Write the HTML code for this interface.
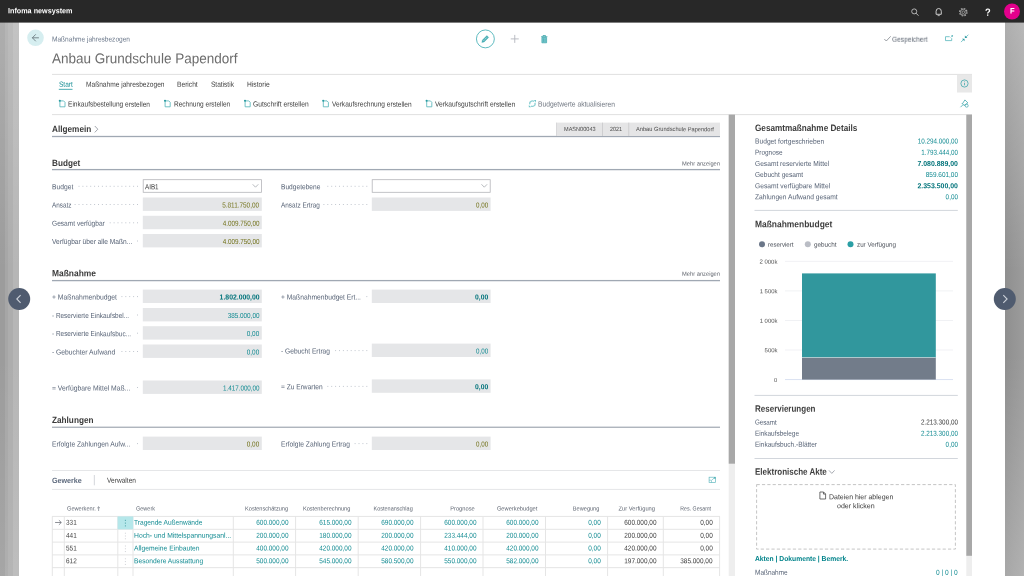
<!DOCTYPE html>
<html lang="de"><head><meta charset="utf-8"><title>Infoma newsystem</title>
<style>
html,body{margin:0;padding:0;}
body{width:1024px;height:576px;overflow:hidden;background:#fff;position:relative;font-family:"Liberation Sans", sans-serif;}
.b{position:absolute;display:block;}
.t{position:absolute;white-space:nowrap;display:block;}
#root{position:absolute;left:0;top:0;width:1024px;height:576px;will-change:transform;}
</style></head><body><div id="root">
<svg class="b" style="left:0;top:0" width="1024" height="576" viewBox="0 0 1024 576">
<defs><linearGradient id="gl" x1="0" y1="0" x2="1" y2="0"><stop offset="0" stop-color="#9c9c9c"/><stop offset="0.26" stop-color="#9c9c9c"/><stop offset="0.26" stop-color="#a6a6a6"/><stop offset="0.42" stop-color="#a6a6a6"/><stop offset="0.42" stop-color="#adadad"/><stop offset="0.68" stop-color="#adadad"/><stop offset="0.68" stop-color="#b6b6b6"/><stop offset="1" stop-color="#b6b6b6"/></linearGradient><linearGradient id="gr" x1="0" y1="0" x2="1" y2="0"><stop offset="0" stop-color="#8f8f8f"/><stop offset="1" stop-color="#9c9c9c"/></linearGradient><linearGradient id="gv1" x1="0" y1="0" x2="0" y2="1"><stop offset="0" stop-color="#fff" stop-opacity=".18"/><stop offset=".45" stop-color="#fff" stop-opacity="0"/><stop offset=".6" stop-color="#fff" stop-opacity="0"/><stop offset="1" stop-color="#fff" stop-opacity=".1"/></linearGradient><linearGradient id="gv2" x1="0" y1="0" x2="0" y2="1"><stop offset="0" stop-color="#fff" stop-opacity=".28"/><stop offset=".45" stop-color="#fff" stop-opacity="0"/><stop offset=".6" stop-color="#fff" stop-opacity="0"/><stop offset="1" stop-color="#fff" stop-opacity=".22"/></linearGradient></defs>
<rect x="0.00" y="22.00" width="19.00" height="554.00" fill="url(#gl)" />
<rect x="0.00" y="22.00" width="19.00" height="554.00" fill="url(#gv1)" />
<rect x="1005.00" y="22.00" width="19.00" height="554.00" fill="url(#gr)" />
<rect x="1005.00" y="22.00" width="19.00" height="554.00" fill="url(#gv2)" />
<rect x="0.00" y="0.00" width="1024.00" height="22.60" fill="#282828" />
<g transform="translate(910.00 7.50)"><circle cx="4.2" cy="3.9" r="2.5" fill="none" stroke="#b9b9b9" stroke-width="0.95"/><path d="M6.1 5.8 L8.2 7.9" stroke="#b9b9b9" stroke-width="1.0" stroke-linecap="round"/></g>
<g transform="translate(934.00 7.00)"><path d="M2.1 7.3 V4.3 A2.6 2.8 0 0 1 7.3 4.3 V7.3 Z" fill="none" stroke="#d4d4d4" stroke-width="0.95" stroke-linejoin="round"/><path d="M4 8.6 H5.4" stroke="#d4d4d4" stroke-width="0.8" stroke-linecap="round"/></g>
<g transform="translate(958.30 7.20)"><circle cx="5" cy="5" r="3.7" fill="none" stroke="#a4a4a4" stroke-width="1.2" stroke-dasharray="1.7 1.2"/><circle cx="5" cy="5" r="2.9" fill="none" stroke="#a4a4a4" stroke-width="0.8"/><circle cx="5" cy="5" r="1.3" fill="none" stroke="#a4a4a4" stroke-width="0.8"/></g>
<circle cx="1012.00" cy="11.50" r="8.00" fill="#e3008c"/>
<circle cx="35.50" cy="37.80" r="8.30" fill="#d6eef0"/>
<g transform="translate(30.50 33.50)"><path d="M8 4.3 H2.1 M5 1.1 L1.9 4.3 L5 7.5" fill="none" stroke="#5f6f75" stroke-width="0.8" stroke-linecap="round" stroke-linejoin="round"/></g>
<circle cx="485.40" cy="38.90" r="8.95" fill="none" stroke="#4db3b9" stroke-width="0.9"/>
<g transform="translate(480.40 33.90)"><path d="M1.4 8.6 L2.0 6.2 L6.5 1.7 L8.3 3.5 L3.8 8.0 Z" fill="#49b0b6" stroke="#3aa4aa" stroke-width="0.3" stroke-linejoin="round"/><path d="M3.3 6.7 L6.7 3.3" stroke="#ffffff" stroke-width="0.7" stroke-dasharray="0.9 0.55"/></g>
<g transform="translate(509.75 33.90)"><path d="M5 1 V9 M1 5 H9" stroke="#b3b5bd" stroke-width="0.9"/></g>
<g transform="translate(540.00 34.40)"><path d="M1.1 2.3 H7.4 M3 2.2 V1.1 H5.5 V2.2" fill="none" stroke="#3aa4aa" stroke-width="0.8"/><path d="M1.9 3 H6.6 V8.4 H1.9 Z" fill="#7ccacf" stroke="#3aa4aa" stroke-width="0.7"/><path d="M3.45 3.9 V7.5 M5.05 3.9 V7.5" stroke="#3aa4aa" stroke-width="0.6"/></g>
<g transform="translate(883.80 35.60)"><path d="M0.5 3.4 L2.5 5.4 L6.9 0.7" fill="none" stroke="#70757d" stroke-width="0.7"/></g>
<g transform="translate(944.80 34.60)"><path d="M4.9 2.1 H0.7 V6 H6.9 V3.6" fill="none" stroke="#4fb3b8" stroke-width="0.75"/><path d="M5.9 2.9 L7.6 1.2" stroke="#4fb3b8" stroke-width="0.7"/><path d="M6.3 0.7 H8.1 V2.5 Z" fill="#3aa4aa"/></g>
<g transform="translate(960.40 34.20)"><path d="M0.6 7.9 L2.9 5.6" stroke="#4fb3b8" stroke-width="0.75"/><path d="M1.6 4.5 H4.1 V7 Z" fill="#2f9ba2"/><path d="M8 0.5 L5.7 2.8" stroke="#4fb3b8" stroke-width="0.75"/><path d="M4.5 1.4 V3.9 H7 Z" fill="#2f9ba2"/></g>
<rect x="52.00" y="73.90" width="920.00" height="1.00" fill="#e0e0e0" />
<rect x="58.80" y="88.85" width="13.70" height="0.90" fill="#3aa4aa" />
<g transform="translate(58.60 99.60)"><path d="M1.3 1.3 H5 L6.4 2.7 V7.2 H1.3 Z" fill="none" stroke="#4fb3b8" stroke-width="0.8"/><circle cx="1.2" cy="1.2" r="1.05" fill="#2a9ba1"/></g>
<g transform="translate(163.80 99.60)"><path d="M1.3 1.3 H5 L6.4 2.7 V7.2 H1.3 Z" fill="none" stroke="#4fb3b8" stroke-width="0.8"/><circle cx="1.2" cy="1.2" r="1.05" fill="#2a9ba1"/></g>
<g transform="translate(243.80 99.60)"><path d="M1.3 1.3 H5 L6.4 2.7 V7.2 H1.3 Z" fill="none" stroke="#4fb3b8" stroke-width="0.8"/><circle cx="1.2" cy="1.2" r="1.05" fill="#2a9ba1"/></g>
<g transform="translate(322.00 99.60)"><path d="M1.3 1.3 H5 L6.4 2.7 V7.2 H1.3 Z" fill="none" stroke="#4fb3b8" stroke-width="0.8"/><circle cx="1.2" cy="1.2" r="1.05" fill="#2a9ba1"/></g>
<g transform="translate(425.40 99.60)"><path d="M1.3 1.3 H5 L6.4 2.7 V7.2 H1.3 Z" fill="none" stroke="#4fb3b8" stroke-width="0.8"/><circle cx="1.2" cy="1.2" r="1.05" fill="#2a9ba1"/></g>
<g transform="translate(528.40 99.70)"><circle cx="4" cy="4" r="2.7" fill="none" stroke="#8ed0d4" stroke-width="1.25" stroke-dasharray="6.6 1.88" transform="rotate(-20 4 4)"/><path d="M5.4 0.4 H7.6 V2.6 Z" fill="#6cc3c7"/><path d="M2.6 7.6 H0.4 V5.4 Z" fill="#6cc3c7"/></g>
<rect x="957.00" y="74.90" width="15.00" height="17.60" fill="#e8e8e8" />
<g transform="translate(960.00 79.00)"><circle cx="4.5" cy="4.5" r="3.6" fill="none" stroke="#3aa4aa" stroke-width="0.75"/><path d="M4.5 3.9 V6.3" stroke="#3aa4aa" stroke-width="0.75"/><circle cx="4.5" cy="2.8" r="0.45" fill="#3aa4aa"/></g>
<g transform="translate(959.50 98.50)"><path d="M1 8.7 L3.7 6 M2.3 4.6 L5.2 7.5 M3 5.2 L5.4 1.4 L8.4 4.4 L4.6 6.8" fill="none" stroke="#3aa4aa" stroke-width="0.75" stroke-linejoin="round"/><circle cx="7.2" cy="7.2" r="1.5" fill="none" stroke="#3aa4aa" stroke-width="0.7"/></g>
<rect x="52.00" y="114.10" width="920.00" height="1.00" fill="#e0e0e0" />
<g transform="translate(93.80 125.20)"><path d="M1 0.8 L4 4 L1 7.2" fill="none" stroke="#8a8f98" stroke-width="0.8"/></g>
<rect x="52.00" y="135.85" width="668.00" height="1.30" fill="#a0a8b3" />
<rect x="556.30" y="122.60" width="163.70" height="13.40" fill="#e5e5e6" />
<rect x="602.20" y="122.60" width="0.80" height="13.40" fill="#c9c9cb" />
<rect x="628.40" y="122.60" width="0.80" height="13.40" fill="#c9c9cb" />
<rect x="556.25" y="122.60" width="0.70" height="13.40" fill="#cfcfd1" />
<rect x="728.70" y="114.60" width="6.30" height="461.40" fill="#eeeeee" />
<rect x="728.70" y="114.60" width="6.30" height="349.10" fill="#a8a8a8" />
<rect x="52.00" y="168.95" width="668.00" height="1.30" fill="#a0a8b3" />
<rect x="143.20" y="179.70" width="118.20" height="12.60" fill="#ffffff" stroke="#b4b5b9" stroke-width="0.8" />
<g transform="translate(252.00 183.40)"><path d="M0.7 0.9 L3.5 3.8 L6.3 0.9" fill="none" stroke="#9a9da3" stroke-width="0.7"/></g>
<path d="M78.50 186.30 H138.00" stroke="#c2c7cf" stroke-width="1" stroke-dasharray="1 2.9" fill="none"/>
<rect x="142.80" y="197.50" width="119.00" height="13.40" fill="#e5e6e8" />
<path d="M74.60 204.50 H138.00" stroke="#c2c7cf" stroke-width="1" stroke-dasharray="1 2.9" fill="none"/>
<rect x="142.80" y="215.80" width="119.00" height="13.40" fill="#e5e6e8" />
<path d="M109.70 222.80 H138.00" stroke="#c2c7cf" stroke-width="1" stroke-dasharray="1 2.9" fill="none"/>
<rect x="142.80" y="234.00" width="119.00" height="13.40" fill="#e5e6e8" />
<path d="M137.00 241.00 H138.00" stroke="#c2c7cf" stroke-width="1" stroke-dasharray="1 2.9" fill="none"/>
<rect x="372.20" y="179.70" width="118.00" height="12.60" fill="#ffffff" stroke="#b4b5b9" stroke-width="0.8" />
<g transform="translate(480.80 183.40)"><path d="M0.7 0.9 L3.5 3.8 L6.3 0.9" fill="none" stroke="#9a9da3" stroke-width="0.7"/></g>
<path d="M327.30 186.30 H367.30" stroke="#c2c7cf" stroke-width="1" stroke-dasharray="1 2.9" fill="none"/>
<rect x="371.80" y="197.50" width="118.80" height="13.40" fill="#e5e6e8" />
<path d="M323.40 204.50 H367.30" stroke="#c2c7cf" stroke-width="1" stroke-dasharray="1 2.9" fill="none"/>
<rect x="52.00" y="279.95" width="668.00" height="1.30" fill="#a0a8b3" />
<rect x="142.80" y="289.60" width="119.00" height="13.40" fill="#e5e6e8" />
<path d="M121.40 296.60 H138.00" stroke="#c2c7cf" stroke-width="1" stroke-dasharray="1 2.9" fill="none"/>
<rect x="142.80" y="308.00" width="119.00" height="13.40" fill="#e5e6e8" />
<path d="M137.00 315.00 H138.00" stroke="#c2c7cf" stroke-width="1" stroke-dasharray="1 2.9" fill="none"/>
<rect x="142.80" y="326.20" width="119.00" height="13.40" fill="#e5e6e8" />
<path d="M137.00 333.20 H138.00" stroke="#c2c7cf" stroke-width="1" stroke-dasharray="1 2.9" fill="none"/>
<rect x="142.80" y="344.50" width="119.00" height="13.40" fill="#e5e6e8" />
<path d="M121.40 351.50 H138.00" stroke="#c2c7cf" stroke-width="1" stroke-dasharray="1 2.9" fill="none"/>
<rect x="142.80" y="380.50" width="119.00" height="13.40" fill="#e5e6e8" />
<path d="M137.00 387.50 H138.00" stroke="#c2c7cf" stroke-width="1" stroke-dasharray="1 2.9" fill="none"/>
<rect x="371.80" y="289.60" width="118.80" height="13.40" fill="#e5e6e8" />
<path d="M366.30 296.60 H367.30" stroke="#c2c7cf" stroke-width="1" stroke-dasharray="1 2.9" fill="none"/>
<rect x="371.80" y="343.60" width="118.80" height="13.40" fill="#e5e6e8" />
<path d="M335.10 350.60 H367.30" stroke="#c2c7cf" stroke-width="1" stroke-dasharray="1 2.9" fill="none"/>
<rect x="371.80" y="379.40" width="118.80" height="13.40" fill="#e5e6e8" />
<path d="M327.30 386.40 H367.30" stroke="#c2c7cf" stroke-width="1" stroke-dasharray="1 2.9" fill="none"/>
<rect x="52.00" y="426.70" width="668.00" height="1.00" fill="#8d96a2" />
<rect x="142.80" y="436.60" width="119.00" height="13.40" fill="#e5e6e8" />
<path d="M137.00 443.60 H138.00" stroke="#c2c7cf" stroke-width="1" stroke-dasharray="1 2.9" fill="none"/>
<rect x="371.80" y="436.60" width="118.80" height="13.40" fill="#e5e6e8" />
<path d="M354.60 443.60 H367.30" stroke="#c2c7cf" stroke-width="1" stroke-dasharray="1 2.9" fill="none"/>
<rect x="52.00" y="470.00" width="668.00" height="1.00" fill="#e5e6e8" />
<rect x="52.00" y="488.90" width="668.00" height="1.00" fill="#e5e6e8" />
<rect x="93.85" y="475.00" width="0.90" height="10.30" fill="#cfd2d7" />
<g transform="translate(708.70 476.80)"><rect x="0.4" y="0.4" width="6.5" height="5.4" fill="none" stroke="#62b9bf" stroke-width="0.7"/><path d="M0.4 3.4 H2.8 V5.8" fill="none" stroke="#62b9bf" stroke-width="0.6"/><path d="M3.4 3.0 L5.9 0.9" stroke="#62b9bf" stroke-width="0.7"/><rect x="5.3" y="0.4" width="1.6" height="1.4" fill="#4aacb2"/></g>
<g transform="translate(96.60 506.30)"><path d="M2 0.5 V4.7 M0.6 1.9 L2 0.5 L3.4 1.9" fill="none" stroke="#5f6672" stroke-width="0.6"/></g>
<rect x="52.00" y="515.90" width="668.00" height="1.00" fill="#e5e5e5" />
<rect x="52.00" y="528.80" width="668.00" height="1.00" fill="#e5e5e5" />
<rect x="52.00" y="541.60" width="668.00" height="1.00" fill="#e5e5e5" />
<rect x="52.00" y="554.40" width="668.00" height="1.00" fill="#e5e5e5" />
<rect x="52.00" y="567.15" width="668.00" height="1.00" fill="#e5e5e5" />
<rect x="51.80" y="516.40" width="1.00" height="59.60" fill="#e5e5e5" />
<rect x="63.80" y="516.40" width="1.00" height="59.60" fill="#e5e5e5" />
<rect x="117.30" y="516.40" width="1.00" height="59.60" fill="#e5e5e5" />
<rect x="132.50" y="516.40" width="1.00" height="59.60" fill="#e5e5e5" />
<rect x="232.80" y="516.40" width="1.00" height="59.60" fill="#e5e5e5" />
<rect x="295.10" y="516.40" width="1.00" height="59.60" fill="#e5e5e5" />
<rect x="357.70" y="516.40" width="1.00" height="59.60" fill="#e5e5e5" />
<rect x="420.10" y="516.40" width="1.00" height="59.60" fill="#e5e5e5" />
<rect x="482.50" y="516.40" width="1.00" height="59.60" fill="#e5e5e5" />
<rect x="545.00" y="516.40" width="1.00" height="59.60" fill="#e5e5e5" />
<rect x="607.10" y="516.40" width="1.00" height="59.60" fill="#e5e5e5" />
<rect x="662.80" y="516.40" width="1.00" height="59.60" fill="#e5e5e5" />
<rect x="719.10" y="516.40" width="1.00" height="59.60" fill="#e5e5e5" />
<rect x="117.60" y="516.40" width="15.60" height="12.90" fill="#b5e7ea" />
<rect x="124.90" y="519.85" width="0.90" height="0.90" fill="#2a8d93" />
<rect x="124.90" y="522.65" width="0.90" height="0.90" fill="#2a8d93" />
<rect x="124.90" y="525.45" width="0.90" height="0.90" fill="#2a8d93" />
<rect x="124.90" y="532.75" width="0.90" height="0.90" fill="#c5c8cd" />
<rect x="124.90" y="535.55" width="0.90" height="0.90" fill="#c5c8cd" />
<rect x="124.90" y="538.35" width="0.90" height="0.90" fill="#c5c8cd" />
<rect x="124.90" y="545.55" width="0.90" height="0.90" fill="#c5c8cd" />
<rect x="124.90" y="548.35" width="0.90" height="0.90" fill="#c5c8cd" />
<rect x="124.90" y="551.15" width="0.90" height="0.90" fill="#c5c8cd" />
<rect x="124.90" y="558.35" width="0.90" height="0.90" fill="#c5c8cd" />
<rect x="124.90" y="561.15" width="0.90" height="0.90" fill="#c5c8cd" />
<rect x="124.90" y="563.95" width="0.90" height="0.90" fill="#c5c8cd" />
<g transform="translate(54.60 519.10)"><path d="M0.5 3.4 H6.6 M4.3 1.1 L6.7 3.4 L4.3 5.7" fill="none" stroke="#5b6068" stroke-width="0.7"/></g>
<rect x="966.30" y="114.60" width="5.70" height="461.40" fill="#eeeeee" />
<rect x="966.30" y="114.60" width="5.70" height="441.20" fill="#a8a8a8" />
<rect x="754.50" y="209.90" width="203.30" height="1.00" fill="#d2d6dc" />
<circle cx="762.00" cy="244.30" r="3.00" fill="#6b7789"/>
<circle cx="807.80" cy="244.30" r="3.00" fill="#babdc5"/>
<circle cx="850.50" cy="244.30" r="3.00" fill="#2b9fa5"/>
<rect x="785.00" y="260.85" width="168.00" height="0.90" fill="#eff0f3" />
<rect x="785.00" y="290.45" width="168.00" height="0.90" fill="#eff0f3" />
<rect x="785.00" y="320.05" width="168.00" height="0.90" fill="#eff0f3" />
<rect x="785.00" y="349.55" width="168.00" height="0.90" fill="#eff0f3" />
<rect x="785.00" y="379.15" width="168.00" height="0.90" fill="#d6dff0" />
<rect x="802.00" y="273.40" width="133.80" height="83.90" fill="#31979d" />
<rect x="802.00" y="357.30" width="133.80" height="22.30" fill="#727c8a" />
<rect x="802.00" y="357.00" width="133.80" height="0.80" fill="#b9d6da" />
<rect x="754.50" y="394.90" width="203.30" height="1.00" fill="#d2d6dc" />
<rect x="754.50" y="458.00" width="203.30" height="1.00" fill="#d2d6dc" />
<g transform="translate(828.40 469.60)"><path d="M0.6 0.8 L3.4 3.8 L6.2 0.8" fill="none" stroke="#8a8f98" stroke-width="0.75"/></g>
<rect x="756.6" y="484.6" width="198.8" height="64.5" fill="none" stroke="#bebebe" stroke-width="0.9" stroke-dasharray="3.2 2.15"/>
<g transform="translate(819.30 491.40)"><path d="M0.6 0.6 H4.3 L6.3 2.6 V7.6 H0.6 Z M4.2 0.7 V2.7 H6.2" fill="none" stroke="#4a4a4a" stroke-width="0.8" stroke-linejoin="round"/></g>
<circle cx="19.20" cy="299.00" r="11.00" fill="#4f5b6f"/>
<g transform="translate(14.70 294.00)"><path d="M5.9 1.2 L2.1 5 L5.9 8.8" fill="none" stroke="#ccd1d9" stroke-width="1.1"/></g>
<circle cx="1004.80" cy="299.00" r="11.00" fill="#4f5b6f"/>
<g transform="translate(1001.20 294.00)"><path d="M2.1 1.2 L5.9 5 L2.1 8.8" fill="none" stroke="#ccd1d9" stroke-width="1.1"/></g>
</svg>
<span class="t" id="t0" style="top:6px;font-size:7.5px;line-height:9.75px;color:#ffffff;font-weight:700;left:7.50px;transform-origin:0 50%;transform:translateY(0.32px) scaleX(0.9611) rotate(0.03deg);">Infoma newsystem</span>
<span class="t" id="t1" style="top:5px;font-size:10.5px;line-height:13.65px;color:#ffffff;font-weight:700;left:985.20px;transform-origin:0 50%;transform:translateY(0.77px) scaleX(0.8867) rotate(0.03deg);">?</span>
<span class="t" id="t2" style="top:6px;font-size:8px;line-height:10.4px;color:#ffffff;font-weight:700;left:1009.70px;transform-origin:0 50%;transform:translateY(0.40px) scaleX(0.9397) rotate(0.03deg);">F</span>
<span class="t" id="t3" style="top:34px;font-size:7.2px;line-height:9.36px;color:#6a778a;left:52.00px;transform-origin:0 50%;transform:translateY(0.42px) scaleX(0.9121) rotate(0.03deg);">Maßnahme jahresbezogen</span>
<span class="t" id="t4" style="top:49px;font-size:14.2px;line-height:18.46px;color:#6c6c6c;left:52.00px;transform-origin:0 50%;transform:translateY(0.27px) scaleX(0.9521) rotate(0.03deg);">Anbau Grundschule Papendorf</span>
<span class="t" id="t5" style="top:34px;font-size:7.3px;line-height:9.49px;color:#5a6370;left:891.60px;transform-origin:0 50%;transform:translateY(0.76px) scaleX(0.9047) rotate(0.03deg);">Gespeichert</span>
<span class="t" id="t6" style="top:79px;font-size:7.4px;line-height:9.62px;color:#128b92;left:58.80px;transform-origin:0 50%;transform:translateY(0.69px) scaleX(0.8774) rotate(0.03deg);">Start</span>
<span class="t" id="t7" style="top:79px;font-size:7.4px;line-height:9.62px;color:#3c3c3c;left:85.50px;transform-origin:0 50%;transform:translateY(0.69px) scaleX(0.8928) rotate(0.03deg);">Maßnahme jahresbezogen</span>
<span class="t" id="t8" style="top:79px;font-size:7.4px;line-height:9.62px;color:#3c3c3c;left:176.80px;transform-origin:0 50%;transform:translateY(0.69px) scaleX(0.8992) rotate(0.03deg);">Bericht</span>
<span class="t" id="t9" style="top:79px;font-size:7.4px;line-height:9.62px;color:#3c3c3c;left:210.80px;transform-origin:0 50%;transform:translateY(0.69px) scaleX(0.8849) rotate(0.03deg);">Statistik</span>
<span class="t" id="t10" style="top:79px;font-size:7.4px;line-height:9.62px;color:#3c3c3c;left:246.80px;transform-origin:0 50%;transform:translateY(0.69px) scaleX(0.9056) rotate(0.03deg);">Historie</span>
<span class="t" id="t11" style="top:99px;font-size:7.4px;line-height:9.62px;color:#3c3c3c;left:68.30px;transform-origin:0 50%;transform:translateY(0.59px) scaleX(0.8910) rotate(0.03deg);">Einkaufsbestellung erstellen</span>
<span class="t" id="t12" style="top:99px;font-size:7.4px;line-height:9.62px;color:#3c3c3c;left:173.80px;transform-origin:0 50%;transform:translateY(0.59px) scaleX(0.8824) rotate(0.03deg);">Rechnung erstellen</span>
<span class="t" id="t13" style="top:99px;font-size:7.4px;line-height:9.62px;color:#3c3c3c;left:253.30px;transform-origin:0 50%;transform:translateY(0.59px) scaleX(0.9038) rotate(0.03deg);">Gutschrift erstellen</span>
<span class="t" id="t14" style="top:99px;font-size:7.4px;line-height:9.62px;color:#3c3c3c;left:332.30px;transform-origin:0 50%;transform:translateY(0.59px) scaleX(0.8897) rotate(0.03deg);">Verkaufsrechnung erstellen</span>
<span class="t" id="t15" style="top:99px;font-size:7.4px;line-height:9.62px;color:#3c3c3c;left:435.30px;transform-origin:0 50%;transform:translateY(0.59px) scaleX(0.9038) rotate(0.03deg);">Verkaufsgutschrift erstellen</span>
<span class="t" id="t16" style="top:99px;font-size:7.4px;line-height:9.62px;color:#6f7680;left:538.00px;transform-origin:0 50%;transform:translateY(0.59px) scaleX(0.9053) rotate(0.03deg);">Budgetwerte aktualisieren</span>
<span class="t" id="t17" style="top:123px;font-size:9.0px;line-height:11.7px;color:#3a3a3a;font-weight:700;left:52.00px;transform-origin:0 50%;transform:translateY(0.95px) scaleX(0.9135) rotate(0.03deg);">Allgemein</span>
<span class="t" id="t18" style="top:126px;font-size:6.0px;line-height:7.8px;color:#4a4a4a;left:563.60px;transform-origin:0 50%;transform:translateY(0.10px) scaleX(0.9285) rotate(0.03deg);">MASN00043</span>
<span class="t" id="t19" style="top:126px;font-size:6.0px;line-height:7.8px;color:#4a4a4a;left:609.60px;transform-origin:0 50%;transform:translateY(0.10px) scaleX(0.8980) rotate(0.03deg);">2021</span>
<span class="t" id="t20" style="top:126px;font-size:6.0px;line-height:7.8px;color:#4a4a4a;left:635.60px;transform-origin:0 50%;transform:translateY(0.10px) scaleX(0.9453) rotate(0.03deg);">Anbau Grundschule Papendorf</span>
<span class="t" id="t21" style="top:158px;font-size:9.0px;line-height:11.7px;color:#3a3a3a;font-weight:700;left:52.00px;transform-origin:0 50%;transform:translateY(0.05px) scaleX(0.9095) rotate(0.03deg);">Budget</span>
<span class="t" id="t22" style="top:160px;font-size:5.9px;line-height:7.67px;color:#5a5f68;left:682.00px;transform-origin:0 50%;transform:translateY(0.56px) scaleX(0.9751) rotate(0.03deg);">Mehr anzeigen</span>
<span class="t" id="t23" style="top:182px;font-size:7.3px;line-height:9.49px;color:#566275;left:52.00px;transform-origin:0 50%;transform:translateY(0.20px) scaleX(0.9203) rotate(0.03deg);">Budget</span>
<span class="t" id="t24" style="top:182px;font-size:7.3px;line-height:9.49px;color:#3a3a3a;left:145.20px;transform-origin:0 50%;transform:translateY(0.20px) scaleX(0.8590) rotate(0.03deg);">AIB1</span>
<span class="t" id="t25" style="top:200px;font-size:7.3px;line-height:9.49px;color:#566275;left:52.00px;transform-origin:0 50%;transform:translateY(0.40px) scaleX(0.8738) rotate(0.03deg);">Ansatz</span>
<span class="t" id="t26" style="top:200px;font-size:7.3px;line-height:9.49px;color:#73731c;right:764.50px;transform-origin:100% 50%;transform:translateY(0.40px) scaleX(0.8768) rotate(0.03deg);">5.811.750,00</span>
<span class="t" id="t27" style="top:218px;font-size:7.3px;line-height:9.49px;color:#566275;left:52.00px;transform-origin:0 50%;transform:translateY(0.70px) scaleX(0.9039) rotate(0.03deg);">Gesamt verfügbar</span>
<span class="t" id="t28" style="top:218px;font-size:7.3px;line-height:9.49px;color:#73731c;right:764.50px;transform-origin:100% 50%;transform:translateY(0.70px) scaleX(0.8659) rotate(0.03deg);">4.009.750,00</span>
<span class="t" id="t29" style="top:236px;font-size:7.3px;line-height:9.49px;color:#566275;left:52.00px;transform-origin:0 50%;transform:translateY(0.90px) scaleX(0.9081) rotate(0.03deg);">Verfügbar über alle Maßn...</span>
<span class="t" id="t30" style="top:236px;font-size:7.3px;line-height:9.49px;color:#73731c;right:764.50px;transform-origin:100% 50%;transform:translateY(0.90px) scaleX(0.8659) rotate(0.03deg);">4.009.750,00</span>
<span class="t" id="t31" style="top:182px;font-size:7.3px;line-height:9.49px;color:#566275;left:281.30px;transform-origin:0 50%;transform:translateY(0.20px) scaleX(0.9073) rotate(0.03deg);">Budgetebene</span>
<span class="t" id="t32" style="top:200px;font-size:7.3px;line-height:9.49px;color:#566275;left:281.30px;transform-origin:0 50%;transform:translateY(0.40px) scaleX(0.8796) rotate(0.03deg);">Ansatz Ertrag</span>
<span class="t" id="t33" style="top:200px;font-size:7.3px;line-height:9.49px;color:#73731c;right:535.70px;transform-origin:100% 50%;transform:translateY(0.40px) scaleX(0.8516) rotate(0.03deg);">0,00</span>
<span class="t" id="t34" style="top:268px;font-size:9.0px;line-height:11.7px;color:#3a3a3a;font-weight:700;left:52.00px;transform-origin:0 50%;transform:translateY(0.25px) scaleX(0.9358) rotate(0.03deg);">Maßnahme</span>
<span class="t" id="t35" style="top:270px;font-size:5.9px;line-height:7.67px;color:#5a5f68;left:682.00px;transform-origin:0 50%;transform:translateY(0.76px) scaleX(0.9751) rotate(0.03deg);">Mehr anzeigen</span>
<span class="t" id="t36" style="top:292px;font-size:7.3px;line-height:9.49px;color:#566275;left:52.00px;transform-origin:0 50%;transform:translateY(0.50px) scaleX(0.9341) rotate(0.03deg);">+ Maßnahmenbudget</span>
<span class="t" id="t37" style="top:292px;font-size:7.3px;line-height:9.49px;color:#00737a;font-weight:700;right:764.50px;transform-origin:100% 50%;transform:translateY(0.50px) scaleX(0.9387) rotate(0.03deg);">1.802.000,00</span>
<span class="t" id="t38" style="top:310px;font-size:7.3px;line-height:9.49px;color:#566275;left:52.00px;transform-origin:0 50%;transform:translateY(0.90px) scaleX(0.8789) rotate(0.03deg);">- Reservierte Einkaufsbel...</span>
<span class="t" id="t39" style="top:310px;font-size:7.3px;line-height:9.49px;color:#128b92;right:764.50px;transform-origin:100% 50%;transform:translateY(0.90px) scaleX(0.8731) rotate(0.03deg);">385.000,00</span>
<span class="t" id="t40" style="top:329px;font-size:7.3px;line-height:9.49px;color:#566275;left:52.00px;transform-origin:0 50%;transform:translateY(0.10px) scaleX(0.8813) rotate(0.03deg);">- Reservierte Einkaufsbuc...</span>
<span class="t" id="t41" style="top:329px;font-size:7.3px;line-height:9.49px;color:#128b92;right:764.50px;transform-origin:100% 50%;transform:translateY(0.10px) scaleX(0.8798) rotate(0.03deg);">0,00</span>
<span class="t" id="t42" style="top:347px;font-size:7.3px;line-height:9.49px;color:#566275;left:52.00px;transform-origin:0 50%;transform:translateY(0.40px) scaleX(0.9232) rotate(0.03deg);">- Gebuchter Aufwand</span>
<span class="t" id="t43" style="top:347px;font-size:7.3px;line-height:9.49px;color:#128b92;right:764.50px;transform-origin:100% 50%;transform:translateY(0.40px) scaleX(0.8798) rotate(0.03deg);">0,00</span>
<span class="t" id="t44" style="top:383px;font-size:7.3px;line-height:9.49px;color:#566275;left:52.00px;transform-origin:0 50%;transform:translateY(0.40px) scaleX(0.9304) rotate(0.03deg);">= Verfügbare Mittel Maß...</span>
<span class="t" id="t45" style="top:383px;font-size:7.3px;line-height:9.49px;color:#128b92;right:764.50px;transform-origin:100% 50%;transform:translateY(0.40px) scaleX(0.8612) rotate(0.03deg);">1.417.000,00</span>
<span class="t" id="t46" style="top:292px;font-size:7.3px;line-height:9.49px;color:#566275;left:281.30px;transform-origin:0 50%;transform:translateY(0.50px) scaleX(0.9193) rotate(0.03deg);">+ Maßnahmenbudget Ert...</span>
<span class="t" id="t47" style="top:292px;font-size:7.3px;line-height:9.49px;color:#00737a;font-weight:700;right:535.70px;transform-origin:100% 50%;transform:translateY(0.50px) scaleX(0.9220) rotate(0.03deg);">0,00</span>
<span class="t" id="t48" style="top:346px;font-size:7.3px;line-height:9.49px;color:#566275;left:281.30px;transform-origin:0 50%;transform:translateY(0.50px) scaleX(0.9081) rotate(0.03deg);">- Gebucht Ertrag</span>
<span class="t" id="t49" style="top:346px;font-size:7.3px;line-height:9.49px;color:#128b92;right:535.70px;transform-origin:100% 50%;transform:translateY(0.50px) scaleX(0.8516) rotate(0.03deg);">0,00</span>
<span class="t" id="t50" style="top:382px;font-size:7.3px;line-height:9.49px;color:#566275;left:281.30px;transform-origin:0 50%;transform:translateY(0.30px) scaleX(0.9058) rotate(0.03deg);">= Zu Erwarten</span>
<span class="t" id="t51" style="top:382px;font-size:7.3px;line-height:9.49px;color:#00737a;font-weight:700;right:535.70px;transform-origin:100% 50%;transform:translateY(0.30px) scaleX(0.9220) rotate(0.03deg);">0,00</span>
<span class="t" id="t52" style="top:415px;font-size:9.0px;line-height:11.7px;color:#3a3a3a;font-weight:700;left:52.00px;transform-origin:0 50%;transform:translateY(0.05px) scaleX(0.9120) rotate(0.03deg);">Zahlungen</span>
<span class="t" id="t53" style="top:439px;font-size:7.3px;line-height:9.49px;color:#566275;left:52.00px;transform-origin:0 50%;transform:translateY(0.50px) scaleX(0.9191) rotate(0.03deg);">Erfolgte Zahlungen Aufw...</span>
<span class="t" id="t54" style="top:439px;font-size:7.3px;line-height:9.49px;color:#73731c;right:764.50px;transform-origin:100% 50%;transform:translateY(0.50px) scaleX(0.8798) rotate(0.03deg);">0,00</span>
<span class="t" id="t55" style="top:439px;font-size:7.3px;line-height:9.49px;color:#566275;left:281.30px;transform-origin:0 50%;transform:translateY(0.50px) scaleX(0.9144) rotate(0.03deg);">Erfolgte Zahlung Ertrag</span>
<span class="t" id="t56" style="top:439px;font-size:7.3px;line-height:9.49px;color:#73731c;right:535.70px;transform-origin:100% 50%;transform:translateY(0.50px) scaleX(0.8516) rotate(0.03deg);">0,00</span>
<span class="t" id="t57" style="top:476px;font-size:7.6px;line-height:9.88px;color:#5f6b7e;font-weight:700;left:52.00px;transform-origin:0 50%;transform:translateY(0.06px) scaleX(0.9408) rotate(0.03deg);">Gewerke</span>
<span class="t" id="t58" style="top:475px;font-size:7.3px;line-height:9.49px;color:#3c3c3c;left:107.00px;transform-origin:0 50%;transform:translateY(0.65px) scaleX(0.9048) rotate(0.03deg);">Verwalten</span>
<span class="t" id="t59" style="top:505px;font-size:6.0px;line-height:7.8px;color:#5f6672;left:67.00px;transform-origin:0 50%;transform:translateY(0.60px) scaleX(0.9384) rotate(0.03deg);">Gewerkenr.</span>
<span class="t" id="t60" style="top:505px;font-size:6.0px;line-height:7.8px;color:#5f6672;left:136.00px;transform-origin:0 50%;transform:translateY(0.60px) scaleX(0.9190) rotate(0.03deg);">Gewerk</span>
<span class="t" id="t61" style="top:505px;font-size:6.0px;line-height:7.8px;color:#5f6672;right:736.00px;transform-origin:100% 50%;transform:translateY(0.60px) scaleX(0.9341) rotate(0.03deg);">Kostenschätzung</span>
<span class="t" id="t62" style="top:505px;font-size:6.0px;line-height:7.8px;color:#5f6672;right:673.70px;transform-origin:100% 50%;transform:translateY(0.60px) scaleX(0.9429) rotate(0.03deg);">Kostenberechnung</span>
<span class="t" id="t63" style="top:505px;font-size:6.0px;line-height:7.8px;color:#5f6672;right:611.50px;transform-origin:100% 50%;transform:translateY(0.60px) scaleX(0.9179) rotate(0.03deg);">Kostenanschlag</span>
<span class="t" id="t64" style="top:505px;font-size:6.0px;line-height:7.8px;color:#5f6672;right:549.00px;transform-origin:100% 50%;transform:translateY(0.60px) scaleX(0.9537) rotate(0.03deg);">Prognose</span>
<span class="t" id="t65" style="top:505px;font-size:6.0px;line-height:7.8px;color:#5f6672;right:486.50px;transform-origin:100% 50%;transform:translateY(0.60px) scaleX(0.9557) rotate(0.03deg);">Gewerkebudget</span>
<span class="t" id="t66" style="top:505px;font-size:6.0px;line-height:7.8px;color:#5f6672;right:424.70px;transform-origin:100% 50%;transform:translateY(0.60px) scaleX(0.9343) rotate(0.03deg);">Bewegung</span>
<span class="t" id="t67" style="top:505px;font-size:6.0px;line-height:7.8px;color:#5f6672;right:368.70px;transform-origin:100% 50%;transform:translateY(0.60px) scaleX(0.9597) rotate(0.03deg);">Zur Verfügung</span>
<span class="t" id="t68" style="top:505px;font-size:6.0px;line-height:7.8px;color:#5f6672;right:312.50px;transform-origin:100% 50%;transform:translateY(0.60px) scaleX(0.8767) rotate(0.03deg);">Res. Gesamt</span>
<span class="t" id="t69" style="top:518px;font-size:7.1px;line-height:9.23px;color:#3a3a3a;left:65.80px;transform-origin:0 50%;transform:translateY(0.78px) scaleX(0.9031) rotate(0.03deg);">331</span>
<span class="t" id="t70" style="top:518px;font-size:7.1px;line-height:9.23px;color:#128b92;left:134.10px;transform-origin:0 50%;transform:translateY(0.78px) scaleX(0.9306) rotate(0.03deg);">Tragende Außenwände</span>
<span class="t" id="t71" style="top:518px;font-size:7.1px;line-height:9.23px;color:#128b92;right:735.00px;transform-origin:100% 50%;transform:translateY(0.78px) scaleX(0.9094) rotate(0.03deg);">600.000,00</span>
<span class="t" id="t72" style="top:518px;font-size:7.1px;line-height:9.23px;color:#128b92;right:672.70px;transform-origin:100% 50%;transform:translateY(0.78px) scaleX(0.9094) rotate(0.03deg);">615.000,00</span>
<span class="t" id="t73" style="top:518px;font-size:7.1px;line-height:9.23px;color:#128b92;right:610.20px;transform-origin:100% 50%;transform:translateY(0.78px) scaleX(0.9094) rotate(0.03deg);">690.000,00</span>
<span class="t" id="t74" style="top:518px;font-size:7.1px;line-height:9.23px;color:#128b92;right:547.80px;transform-origin:100% 50%;transform:translateY(0.78px) scaleX(0.9094) rotate(0.03deg);">600.000,00</span>
<span class="t" id="t75" style="top:518px;font-size:7.1px;line-height:9.23px;color:#128b92;right:485.20px;transform-origin:100% 50%;transform:translateY(0.78px) scaleX(0.9094) rotate(0.03deg);">600.000,00</span>
<span class="t" id="t76" style="top:518px;font-size:7.1px;line-height:9.23px;color:#128b92;right:423.50px;transform-origin:100% 50%;transform:translateY(0.78px) scaleX(0.9119) rotate(0.03deg);">0,00</span>
<span class="t" id="t77" style="top:518px;font-size:7.1px;line-height:9.23px;color:#3a3a3a;right:367.50px;transform-origin:100% 50%;transform:translateY(0.78px) scaleX(0.9094) rotate(0.03deg);">600.000,00</span>
<span class="t" id="t78" style="top:518px;font-size:7.1px;line-height:9.23px;color:#3a3a3a;right:311.50px;transform-origin:100% 50%;transform:translateY(0.78px) scaleX(0.9119) rotate(0.03deg);">0,00</span>
<span class="t" id="t79" style="top:531px;font-size:7.1px;line-height:9.23px;color:#3a3a3a;left:65.80px;transform-origin:0 50%;transform:translateY(0.68px) scaleX(0.9031) rotate(0.03deg);">441</span>
<span class="t" id="t80" style="top:531px;font-size:7.1px;line-height:9.23px;color:#128b92;left:134.10px;transform-origin:0 50%;transform:translateY(0.68px) scaleX(0.9552) rotate(0.03deg);">Hoch- und Mittelspannungsanl...</span>
<span class="t" id="t81" style="top:531px;font-size:7.1px;line-height:9.23px;color:#128b92;right:735.00px;transform-origin:100% 50%;transform:translateY(0.68px) scaleX(0.9094) rotate(0.03deg);">200.000,00</span>
<span class="t" id="t82" style="top:531px;font-size:7.1px;line-height:9.23px;color:#128b92;right:672.70px;transform-origin:100% 50%;transform:translateY(0.68px) scaleX(0.9094) rotate(0.03deg);">180.000,00</span>
<span class="t" id="t83" style="top:531px;font-size:7.1px;line-height:9.23px;color:#128b92;right:610.20px;transform-origin:100% 50%;transform:translateY(0.68px) scaleX(0.9094) rotate(0.03deg);">200.000,00</span>
<span class="t" id="t84" style="top:531px;font-size:7.1px;line-height:9.23px;color:#128b92;right:547.80px;transform-origin:100% 50%;transform:translateY(0.68px) scaleX(0.9094) rotate(0.03deg);">233.444,00</span>
<span class="t" id="t85" style="top:531px;font-size:7.1px;line-height:9.23px;color:#128b92;right:485.20px;transform-origin:100% 50%;transform:translateY(0.68px) scaleX(0.9094) rotate(0.03deg);">200.000,00</span>
<span class="t" id="t86" style="top:531px;font-size:7.1px;line-height:9.23px;color:#128b92;right:423.50px;transform-origin:100% 50%;transform:translateY(0.68px) scaleX(0.9119) rotate(0.03deg);">0,00</span>
<span class="t" id="t87" style="top:531px;font-size:7.1px;line-height:9.23px;color:#3a3a3a;right:367.50px;transform-origin:100% 50%;transform:translateY(0.68px) scaleX(0.9094) rotate(0.03deg);">200.000,00</span>
<span class="t" id="t88" style="top:531px;font-size:7.1px;line-height:9.23px;color:#3a3a3a;right:311.50px;transform-origin:100% 50%;transform:translateY(0.68px) scaleX(0.9119) rotate(0.03deg);">0,00</span>
<span class="t" id="t89" style="top:544px;font-size:7.1px;line-height:9.23px;color:#3a3a3a;left:65.80px;transform-origin:0 50%;transform:translateY(0.49px) scaleX(0.9031) rotate(0.03deg);">551</span>
<span class="t" id="t90" style="top:544px;font-size:7.1px;line-height:9.23px;color:#128b92;left:134.10px;transform-origin:0 50%;transform:translateY(0.49px) scaleX(0.9490) rotate(0.03deg);">Allgemeine Einbauten</span>
<span class="t" id="t91" style="top:544px;font-size:7.1px;line-height:9.23px;color:#128b92;right:735.00px;transform-origin:100% 50%;transform:translateY(0.49px) scaleX(0.9094) rotate(0.03deg);">400.000,00</span>
<span class="t" id="t92" style="top:544px;font-size:7.1px;line-height:9.23px;color:#128b92;right:672.70px;transform-origin:100% 50%;transform:translateY(0.49px) scaleX(0.9094) rotate(0.03deg);">420.000,00</span>
<span class="t" id="t93" style="top:544px;font-size:7.1px;line-height:9.23px;color:#128b92;right:610.20px;transform-origin:100% 50%;transform:translateY(0.49px) scaleX(0.9094) rotate(0.03deg);">420.000,00</span>
<span class="t" id="t94" style="top:544px;font-size:7.1px;line-height:9.23px;color:#128b92;right:547.80px;transform-origin:100% 50%;transform:translateY(0.49px) scaleX(0.9094) rotate(0.03deg);">410.000,00</span>
<span class="t" id="t95" style="top:544px;font-size:7.1px;line-height:9.23px;color:#128b92;right:485.20px;transform-origin:100% 50%;transform:translateY(0.49px) scaleX(0.9094) rotate(0.03deg);">420.000,00</span>
<span class="t" id="t96" style="top:544px;font-size:7.1px;line-height:9.23px;color:#128b92;right:423.50px;transform-origin:100% 50%;transform:translateY(0.49px) scaleX(0.9119) rotate(0.03deg);">0,00</span>
<span class="t" id="t97" style="top:544px;font-size:7.1px;line-height:9.23px;color:#3a3a3a;right:367.50px;transform-origin:100% 50%;transform:translateY(0.49px) scaleX(0.9094) rotate(0.03deg);">420.000,00</span>
<span class="t" id="t98" style="top:544px;font-size:7.1px;line-height:9.23px;color:#3a3a3a;right:311.50px;transform-origin:100% 50%;transform:translateY(0.49px) scaleX(0.9119) rotate(0.03deg);">0,00</span>
<span class="t" id="t99" style="top:557px;font-size:7.1px;line-height:9.23px;color:#3a3a3a;left:65.80px;transform-origin:0 50%;transform:translateY(0.28px) scaleX(0.9031) rotate(0.03deg);">612</span>
<span class="t" id="t100" style="top:557px;font-size:7.1px;line-height:9.23px;color:#128b92;left:134.10px;transform-origin:0 50%;transform:translateY(0.28px) scaleX(0.9432) rotate(0.03deg);">Besondere Ausstattung</span>
<span class="t" id="t101" style="top:557px;font-size:7.1px;line-height:9.23px;color:#128b92;right:735.00px;transform-origin:100% 50%;transform:translateY(0.28px) scaleX(0.9094) rotate(0.03deg);">500.000,00</span>
<span class="t" id="t102" style="top:557px;font-size:7.1px;line-height:9.23px;color:#128b92;right:672.70px;transform-origin:100% 50%;transform:translateY(0.28px) scaleX(0.9094) rotate(0.03deg);">545.000,00</span>
<span class="t" id="t103" style="top:557px;font-size:7.1px;line-height:9.23px;color:#128b92;right:610.20px;transform-origin:100% 50%;transform:translateY(0.28px) scaleX(0.9094) rotate(0.03deg);">580.500,00</span>
<span class="t" id="t104" style="top:557px;font-size:7.1px;line-height:9.23px;color:#128b92;right:547.80px;transform-origin:100% 50%;transform:translateY(0.28px) scaleX(0.9094) rotate(0.03deg);">550.000,00</span>
<span class="t" id="t105" style="top:557px;font-size:7.1px;line-height:9.23px;color:#128b92;right:485.20px;transform-origin:100% 50%;transform:translateY(0.28px) scaleX(0.9094) rotate(0.03deg);">582.000,00</span>
<span class="t" id="t106" style="top:557px;font-size:7.1px;line-height:9.23px;color:#128b92;right:423.50px;transform-origin:100% 50%;transform:translateY(0.28px) scaleX(0.9119) rotate(0.03deg);">0,00</span>
<span class="t" id="t107" style="top:557px;font-size:7.1px;line-height:9.23px;color:#3a3a3a;right:367.50px;transform-origin:100% 50%;transform:translateY(0.28px) scaleX(0.9094) rotate(0.03deg);">197.000,00</span>
<span class="t" id="t108" style="top:557px;font-size:7.1px;line-height:9.23px;color:#3a3a3a;right:311.50px;transform-origin:100% 50%;transform:translateY(0.28px) scaleX(0.9094) rotate(0.03deg);">385.000,00</span>
<span class="t" id="t109" style="top:121px;font-size:9.3px;line-height:12.09px;color:#3d3d3d;font-weight:700;left:754.50px;transform-origin:0 50%;transform:translateY(0.95px) scaleX(0.8798) rotate(0.03deg);">Gesamtmaßnahme Details</span>
<span class="t" id="t110" style="top:136px;font-size:7.2px;line-height:9.36px;color:#566275;left:754.80px;transform-origin:0 50%;transform:translateY(0.62px) scaleX(0.9309) rotate(0.03deg);">Budget fortgeschrieben</span>
<span class="t" id="t111" style="top:136px;font-size:7.2px;line-height:9.36px;color:#128b92;right:66.20px;transform-origin:100% 50%;transform:translateY(0.62px) scaleX(0.8766) rotate(0.03deg);">10.294.000,00</span>
<span class="t" id="t112" style="top:147px;font-size:7.2px;line-height:9.36px;color:#566275;left:754.80px;transform-origin:0 50%;transform:translateY(0.76px) scaleX(0.8933) rotate(0.03deg);">Prognose</span>
<span class="t" id="t113" style="top:147px;font-size:7.2px;line-height:9.36px;color:#128b92;right:66.20px;transform-origin:100% 50%;transform:translateY(0.76px) scaleX(0.8720) rotate(0.03deg);">1.793.444,00</span>
<span class="t" id="t114" style="top:158px;font-size:7.2px;line-height:9.36px;color:#566275;left:754.80px;transform-origin:0 50%;transform:translateY(0.90px) scaleX(0.9242) rotate(0.03deg);">Gesamt reservierte Mittel</span>
<span class="t" id="t115" style="top:158px;font-size:7.2px;line-height:9.36px;color:#00737a;font-weight:700;right:66.20px;transform-origin:100% 50%;transform:translateY(0.90px) scaleX(0.9649) rotate(0.03deg);">7.080.889,00</span>
<span class="t" id="t116" style="top:170px;font-size:7.2px;line-height:9.36px;color:#566275;left:754.80px;transform-origin:0 50%;transform:translateY(0.04px) scaleX(0.9137) rotate(0.03deg);">Gebucht gesamt</span>
<span class="t" id="t117" style="top:170px;font-size:7.2px;line-height:9.36px;color:#128b92;right:66.20px;transform-origin:100% 50%;transform:translateY(0.04px) scaleX(0.8947) rotate(0.03deg);">859.601,00</span>
<span class="t" id="t118" style="top:181px;font-size:7.2px;line-height:9.36px;color:#566275;left:754.80px;transform-origin:0 50%;transform:translateY(0.18px) scaleX(0.9318) rotate(0.03deg);">Gesamt verfügbare Mittel</span>
<span class="t" id="t119" style="top:181px;font-size:7.2px;line-height:9.36px;color:#00737a;font-weight:700;right:66.20px;transform-origin:100% 50%;transform:translateY(0.18px) scaleX(0.9649) rotate(0.03deg);">2.353.500,00</span>
<span class="t" id="t120" style="top:192px;font-size:7.2px;line-height:9.36px;color:#566275;left:754.80px;transform-origin:0 50%;transform:translateY(0.32px) scaleX(0.9280) rotate(0.03deg);">Zahlungen Aufwand gesamt</span>
<span class="t" id="t121" style="top:192px;font-size:7.2px;line-height:9.36px;color:#128b92;right:66.20px;transform-origin:100% 50%;transform:translateY(0.32px) scaleX(0.8854) rotate(0.03deg);">0,00</span>
<span class="t" id="t122" style="top:218px;font-size:9.3px;line-height:12.09px;color:#3d3d3d;font-weight:700;left:754.50px;transform-origin:0 50%;transform:translateY(0.26px) scaleX(0.9069) rotate(0.03deg);">Maßnahmenbudget</span>
<span class="t" id="t123" style="top:240px;font-size:6.6px;line-height:8.58px;color:#4a4f58;left:768.30px;transform-origin:0 50%;transform:translateY(0.81px) scaleX(0.9277) rotate(0.03deg);">reserviert</span>
<span class="t" id="t124" style="top:240px;font-size:6.6px;line-height:8.58px;color:#4a4f58;left:814.00px;transform-origin:0 50%;transform:translateY(0.81px) scaleX(0.9586) rotate(0.03deg);">gebucht</span>
<span class="t" id="t125" style="top:240px;font-size:6.6px;line-height:8.58px;color:#4a4f58;left:856.80px;transform-origin:0 50%;transform:translateY(0.81px) scaleX(0.9497) rotate(0.03deg);">zur Verfügung</span>
<span class="t" id="t126" style="top:258px;font-size:5.8px;line-height:7.54px;color:#4f4f4f;right:246.40px;transform-origin:100% 50%;transform:translateY(0.63px) scaleX(1.0339) rotate(0.03deg);">2 000k</span>
<span class="t" id="t127" style="top:288px;font-size:5.8px;line-height:7.54px;color:#4f4f4f;right:246.40px;transform-origin:100% 50%;transform:translateY(0.23px) scaleX(1.0167) rotate(0.03deg);">1 500k</span>
<span class="t" id="t128" style="top:317px;font-size:5.8px;line-height:7.54px;color:#4f4f4f;right:246.40px;transform-origin:100% 50%;transform:translateY(0.83px) scaleX(1.0167) rotate(0.03deg);">1 000k</span>
<span class="t" id="t129" style="top:347px;font-size:5.8px;line-height:7.54px;color:#4f4f4f;right:246.40px;transform-origin:100% 50%;transform:translateY(0.33px) scaleX(1.0333) rotate(0.03deg);">500k</span>
<span class="t" id="t130" style="top:376px;font-size:5.8px;line-height:7.54px;color:#4f4f4f;right:246.40px;transform-origin:100% 50%;transform:translateY(0.93px) scaleX(0.9884) rotate(0.03deg);">0</span>
<span class="t" id="t131" style="top:402px;font-size:9.3px;line-height:12.09px;color:#3d3d3d;font-weight:700;left:754.50px;transform-origin:0 50%;transform:translateY(0.75px) scaleX(0.8608) rotate(0.03deg);">Reservierungen</span>
<span class="t" id="t132" style="top:417px;font-size:7.2px;line-height:9.36px;color:#566275;left:754.80px;transform-origin:0 50%;transform:translateY(0.62px) scaleX(0.8619) rotate(0.03deg);">Gesamt</span>
<span class="t" id="t133" style="top:417px;font-size:7.2px;line-height:9.36px;color:#3a3a3a;right:66.20px;transform-origin:100% 50%;transform:translateY(0.62px) scaleX(0.8815) rotate(0.03deg);">2.213.300,00</span>
<span class="t" id="t134" style="top:428px;font-size:7.2px;line-height:9.36px;color:#566275;left:754.80px;transform-origin:0 50%;transform:translateY(0.72px) scaleX(0.8950) rotate(0.03deg);">Einkaufsbelege</span>
<span class="t" id="t135" style="top:428px;font-size:7.2px;line-height:9.36px;color:#128b92;right:66.20px;transform-origin:100% 50%;transform:translateY(0.72px) scaleX(0.8815) rotate(0.03deg);">2.213.300,00</span>
<span class="t" id="t136" style="top:439px;font-size:7.2px;line-height:9.36px;color:#566275;left:754.80px;transform-origin:0 50%;transform:translateY(0.82px) scaleX(0.9073) rotate(0.03deg);">Einkaufsbuch.-Blätter</span>
<span class="t" id="t137" style="top:439px;font-size:7.2px;line-height:9.36px;color:#128b92;right:66.20px;transform-origin:100% 50%;transform:translateY(0.82px) scaleX(0.8854) rotate(0.03deg);">0,00</span>
<span class="t" id="t138" style="top:465px;font-size:9.3px;line-height:12.09px;color:#3d3d3d;font-weight:700;left:754.50px;transform-origin:0 50%;transform:translateY(0.75px) scaleX(0.8613) rotate(0.03deg);">Elektronische Akte</span>
<span class="t" id="t139" style="top:492px;font-size:7.2px;line-height:9.36px;color:#3a3a3a;left:828.50px;transform-origin:0 50%;transform:translateY(0.22px) scaleX(0.9691) rotate(0.03deg);">Dateien hier ablegen</span>
<span class="t" id="t140" style="top:501px;font-size:7.2px;line-height:9.36px;color:#3a3a3a;left:837.30px;transform-origin:0 50%;transform:translateY(0.22px) scaleX(0.9827) rotate(0.03deg);">oder klicken</span>
<span class="t" id="t141" style="top:553px;font-size:7.2px;line-height:9.36px;color:#00838a;font-weight:700;left:754.80px;transform-origin:0 50%;transform:translateY(0.92px) scaleX(0.9366) rotate(0.03deg);">Akten | Dokumente | Bemerk.</span>
<span class="t" id="t142" style="top:567px;font-size:7.2px;line-height:9.36px;color:#566275;left:754.80px;transform-origin:0 50%;transform:translateY(0.72px) scaleX(0.8992) rotate(0.03deg);">Maßnahme</span>
<span class="t" id="t143" style="top:567px;font-size:7.2px;line-height:9.36px;color:#128b92;right:66.20px;transform-origin:100% 50%;transform:translateY(0.72px) scaleX(0.9189) rotate(0.03deg);">0 | 0 | 0</span>
</div></body></html>
